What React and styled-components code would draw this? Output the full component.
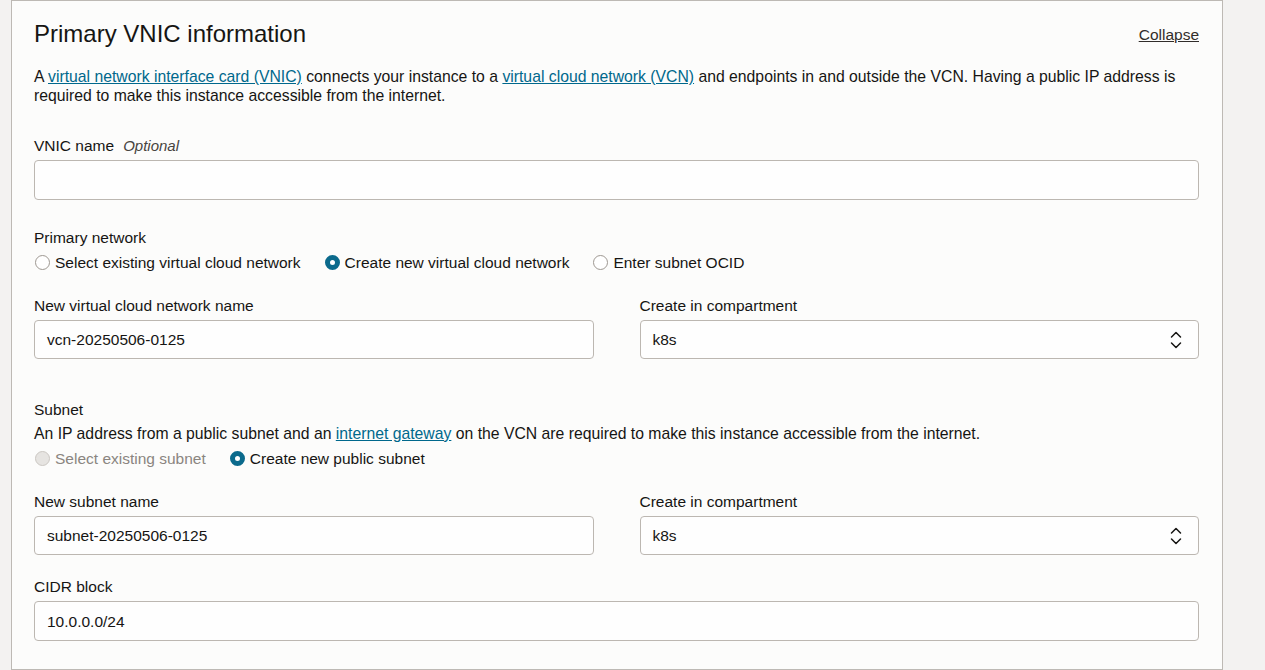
import React from "react";
import styled, { createGlobalStyle } from "styled-components";

const GlobalStyle = createGlobalStyle`
  html, body {
    margin: 0;
    padding: 0;
    background: #f3f2f1;
  }
  body {
    font-family: "Liberation Sans", Arial, sans-serif;
    color: #161513;
    font-size: 15.5px;
    line-height: 19px;
  }
`;

const SPage = styled.div`
  width: 1265px;
  height: 670px;
  overflow: hidden;
  padding-left: 11px;
  box-sizing: border-box;
`;

const SPanel = styled.section`
  width: 1212px;
  height: 670px;
  box-sizing: border-box;
  background: #fcfcfb;
  border: 1px solid #bdb9b4;
  padding: 19px 23px 0 22px;
`;

const SHeader = styled.div`
  display: flex;
  align-items: center;
  justify-content: space-between;
  height: 28px;
`;

const STitle = styled.h2`
  margin: 0;
  font-size: 24px;
  font-weight: 400;
  line-height: 28px;
  color: #161513;
`;

const SCollapse = styled.a`
  color: #312d2a;
  text-decoration: underline;
  font-size: 15.5px;
  cursor: pointer;
`;

const SText = styled.p`
  margin: ${(p) => p.$mt || 0}px 0 0 0;
  font-size: 15.75px;
  line-height: 19px;
`;

const SLink = styled.a`
  color: #00688c;
  text-decoration: underline;
  cursor: pointer;
`;

const SField = styled.div`
  display: flex;
  flex-direction: column;
  gap: 5px;
  margin-top: ${(p) => p.$mt || 0}px;
  min-width: 0;
`;

const SLabel = styled.label`
  line-height: 19px;
`;

const SOptional = styled.span`
  font-style: italic;
  color: #48443f;
  margin-left: 9px;
  font-size: 15px;
`;

const SInputBox = styled.div`
  position: relative;
  height: ${(p) => p.$h || 39}px;
  box-sizing: border-box;
  border: 1px solid #bcb7b1;
  border-radius: 4px;
  background: #fefefe;
  display: flex;
  align-items: center;
  padding: 0 12px 0 12px;
`;

const SValue = styled.span`
  flex: 1;
  color: #161513;
`;

const SChevron = styled.svg`
  width: 14px;
  height: 20px;
  margin-right: 3px;
`;

const SGroup = styled.div`
  margin-top: ${(p) => p.$mt || 0}px;
`;

const SRadioRow = styled.div`
  display: flex;
  align-items: center;
  gap: 23px;
  margin-top: 6px;
`;

const SRadioItem = styled.span`
  display: flex;
  align-items: center;
  gap: 5px;
  color: ${(p) => (p.$disabled ? "#8a8580" : "#161513")};
  line-height: 19px;
`;

const SDot = styled.span`
  width: 15px;
  height: 15px;
  box-sizing: border-box;
  border-radius: 50%;
  margin-left: 1px;
  border: ${(p) =>
    p.$checked ? "5px solid #0b6a8c" : `1px solid ${p.$disabled ? "#cbc7c2" : "#9e9892"}`};
  background: ${(p) => (p.$checked ? "#ffffff" : p.$disabled ? "#e6e4e1" : "#ffffff")};
`;

const SGrid = styled.div`
  display: grid;
  grid-template-columns: 1fr 1fr;
  column-gap: 46px;
  margin-top: ${(p) => p.$mt || 0}px;
`;

function Radio({ label, checked, disabled }) {
  return (
    <SRadioItem $disabled={disabled}>
      <SDot $checked={checked} $disabled={disabled} />
      {label}
    </SRadioItem>
  );
}

function Chevron() {
  return (
    <SChevron viewBox="0 0 14 20" fill="none" stroke="#161513" strokeWidth="1.5" strokeLinecap="round" strokeLinejoin="round">
      <path d="M2.5 7 L7 2.5 L11.5 7" />
      <path d="M2.5 13 L7 17.5 L11.5 13" />
    </SChevron>
  );
}

function Input({ value, h }) {
  return (
    <SInputBox $h={h}>
      <SValue>{value}</SValue>
    </SInputBox>
  );
}

function Select({ value }) {
  return (
    <SInputBox>
      <SValue>{value}</SValue>
      <Chevron />
    </SInputBox>
  );
}

export default function App() {
  return (
    <>
      <GlobalStyle />
      <SPage>
        <SPanel>
          <SHeader>
            <STitle>Primary VNIC information</STitle>
            <SCollapse>Collapse</SCollapse>
          </SHeader>
          <SText $mt={19}>
            A <SLink>virtual network interface card (VNIC)</SLink> connects your instance to a{" "}
            <SLink>virtual cloud network (VCN)</SLink> and endpoints in and outside the VCN. Having a public IP
            address is required to make this instance accessible from the internet.
          </SText>

          <SField $mt={31}>
            <SLabel>
              VNIC name<SOptional>Optional</SOptional>
            </SLabel>
            <Input value="" h={40} />
          </SField>

          <SGroup $mt={28}>
            <SLabel>Primary network</SLabel>
            <SRadioRow>
              <Radio label="Select existing virtual cloud network" />
              <Radio label="Create new virtual cloud network" checked />
              <Radio label="Enter subnet OCID" />
            </SRadioRow>
          </SGroup>

          <SGrid $mt={24}>
            <SField>
              <SLabel>New virtual cloud network name</SLabel>
              <Input value="vcn-20250506-0125" />
            </SField>
            <SField>
              <SLabel>Create in compartment</SLabel>
              <Select value="k8s" />
            </SField>
          </SGrid>

          <SGroup $mt={41}>
            <SLabel>Subnet</SLabel>
            <SText $mt={5}>
              An IP address from a public subnet and an <SLink>internet gateway</SLink> on the VCN are required to
              make this instance accessible from the internet.
            </SText>
            <SRadioRow>
              <Radio label="Select existing subnet" disabled />
              <Radio label="Create new public subnet" checked />
            </SRadioRow>
          </SGroup>

          <SGrid $mt={24}>
            <SField>
              <SLabel>New subnet name</SLabel>
              <Input value="subnet-20250506-0125" />
            </SField>
            <SField>
              <SLabel>Create in compartment</SLabel>
              <Select value="k8s" />
            </SField>
          </SGrid>

          <SField $mt={22}>
            <SLabel>CIDR block</SLabel>
            <Input value="10.0.0.0/24" h={40} />
          </SField>
        </SPanel>
      </SPage>
    </>
  );
}
